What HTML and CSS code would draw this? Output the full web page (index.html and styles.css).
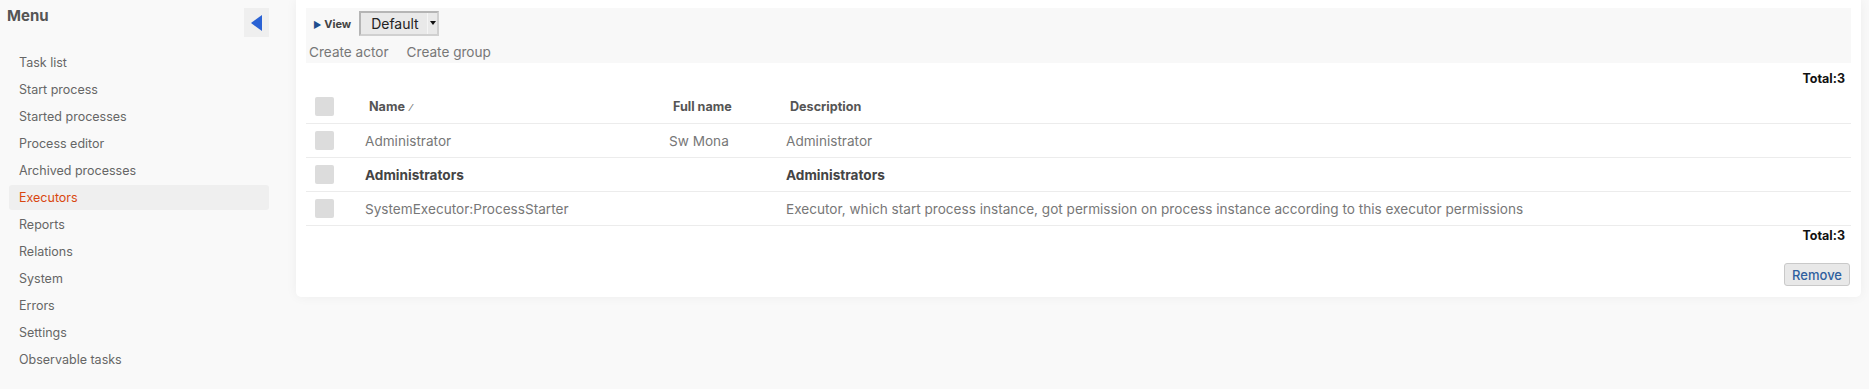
FILE: index.html
```
<!DOCTYPE html>
<html lang="en">

<head>
    <meta charset="UTF-8">
    <title>Executors</title>
    <link rel="stylesheet" href="styles.css">
</head>

<body>
    <div class="layout">
        <div class="sidebar">
            <div class="menu-head">
                <span class="menu-title">Menu</span>
                <span class="collapse-btn">
                    <svg width="11" height="16" viewBox="0 0 11 16">
                        <path d="M11 0 L0 8 L11 16 Z" fill="#2a62d4" />
                    </svg>
                </span>
            </div>
            <ul class="menu">
                <li>Task list</li>
                <li>Start process</li>
                <li>Started processes</li>
                <li>Process editor</li>
                <li>Archived processes</li>
                <li class="active">Executors</li>
                <li>Reports</li>
                <li>Relations</li>
                <li>System</li>
                <li>Errors</li>
                <li>Settings</li>
                <li>Observable tasks</li>
            </ul>
        </div>

        <div class="panel">
            <div class="toolbar">
                <div class="view-row">
                    <span class="view-toggle"><span class="tri">&#9654;</span> View</span>
                    <span class="fake-select">
                        <span class="fake-select-text">Default</span>
                        <span class="fake-select-arrow"></span>
                    </span>
                </div>
                <div class="actions">
                    <a class="action">Create actor</a>
                    <a class="action">Create group</a>
                </div>
            </div>

            <div class="total">Total:3</div>
            <table class="list">
                <thead>
                    <tr>
                        <th class="col-check"><span class="check"></span></th>
                        <th class="col-name">Name <span class="sort">&#8260;</span></th>
                        <th class="col-full">Full name</th>
                        <th>Description</th>
                    </tr>
                </thead>
                <tbody>
                    <tr>
                        <td class="col-check"><span class="check"></span></td>
                        <td>Administrator</td>
                        <td>Sw Mona</td>
                        <td>Administrator</td>
                    </tr>
                    <tr class="group">
                        <td class="col-check"><span class="check"></span></td>
                        <td>Administrators</td>
                        <td></td>
                        <td>Administrators</td>
                    </tr>
                    <tr>
                        <td class="col-check"><span class="check"></span></td>
                        <td>SystemExecutor:ProcessStarter</td>
                        <td></td>
                        <td>Executor, which start process instance, got permission on process instance according to this executor permissions</td>
                    </tr>
                </tbody>
            </table>
            <div class="total bottom">Total:3</div>

            <div class="buttons">
                <button class="btn">Remove</button>
            </div>
        </div>
    </div>
</body>

</html>
```

FILE: styles.css
```
body {
    margin: 0;
    font-family: Inter, "Open Sans", sans-serif;
    background-color: #f9f9f9;
    color: #666;
    font-size: 13px;
}

.layout {
    display: flex;
    align-items: flex-start;
}

.sidebar {
    width: 261px;
    padding: 8px 0 0 8px;
    flex-shrink: 0;
}

.menu-head {
    display: flex;
    justify-content: space-between;
    align-items: flex-start;
    height: 42px;
}

.menu-title {
    font-weight: bold;
    font-size: 15px;
    color: #555;
    margin-left: -1px;
    line-height: 16px;
}

.collapse-btn {
    width: 25px;
    height: 29px;
    background: #efefef;
    display: flex;
    align-items: center;
    justify-content: center;
}

.menu {
    list-style-type: none;
    margin: 0;
    padding: 0;
}

.menu li {
    height: 25px;
    line-height: 25px;
    margin: 0 0 2px 1px;
    padding-left: 10px;
    border-radius: 3px;
    color: #666;
    font-size: 12.5px;
}

.menu li.active {
    background: #efefef;
    color: #d9470f;
}

.panel {
    flex: 1;
    margin: 0 8px 0 27px;
    background: #fff;
    padding: 8px 10px 11px 10px;
    border-radius: 0 0 5px 5px;
    box-shadow: 0 0 12px rgba(0, 0, 0, 0.05);
}

.toolbar {
    background: #f8f8f8;
    height: 55px;
    padding: 3px 0 0 3px;
    box-sizing: border-box;
}

.view-row {
    display: flex;
    align-items: center;
    height: 25px;
    padding-left: 4px;
}

.view-toggle {
    font-size: 11px;
    font-weight: bold;
    color: #444;
    margin-right: 8px;
}

.tri {
    color: #1f4f8f;
    font-size: 9px;
}

.fake-select {
    display: flex;
    width: 80px;
    height: 25px;
    box-sizing: border-box;
    border: 2px solid #b5b5b5;
    border-right-color: #d0d0d0;
    border-bottom-color: #d0d0d0;
    background: #e9e9e9;
}

.fake-select-text {
    flex: 1;
    color: #222;
    font-size: 14px;
    line-height: 21px;
    padding-left: 10px;
}

.fake-select-arrow {
    width: 9px;
    position: relative;
    border-left: 1px solid #f5f5f5;
}

.fake-select-arrow::after {
    content: "";
    position: absolute;
    left: 2px;
    top: 8px;
    border-left: 3px solid transparent;
    border-right: 3px solid transparent;
    border-top: 4px solid #111;
}

.actions {
    display: flex;
    gap: 18px;
    margin-top: 8px;
}

.action {
    color: #777;
    font-size: 13.6px;
}

.total {
    text-align: right;
    font-weight: bold;
    font-size: 12.5px;
    color: #111;
    padding: 6px 6px 0 0;
    height: 20px;
    line-height: 20px;
}

.total.bottom {
    padding-top: 0;
}

.list {
    width: 100%;
    border-collapse: collapse;
}

.list th {
    text-align: left;
    font-size: 12.6px;
    font-weight: bold;
    color: #555;
    height: 34px;
    padding: 0 8px 0 12px;
    border-bottom: 1px solid #ececec;
}

.list td {
    height: 33px;
    padding: 0 8px;
    border-bottom: 1px solid #ececec;
    color: #777;
    font-size: 13.6px;
}

.list .col-check {
    width: 34px;
    padding-left: 9px;
}

.col-name {
    width: 284px;
}

.col-full {
    width: 97px;
}

.sort {
    font-size: 9px;
    color: #777;
    margin-left: 2px;
}

.check {
    display: block;
    width: 19px;
    height: 19px;
    background: #dcdcdc;
    border-radius: 2px;
}

.group td {
    font-weight: bold;
    color: #444;
}

.buttons {
    display: flex;
    justify-content: flex-end;
    margin-top: 17px;
}

.btn {
    font-family: inherit;
    font-size: 13px;
    font-weight: 500;
    color: #2f5f9e;
    background: #e8e8e8;
    border: 1px solid #c9c9c9;
    border-radius: 3px;
    height: 23px;
    padding: 0 7px;
    margin-right: 1px;
}
```
